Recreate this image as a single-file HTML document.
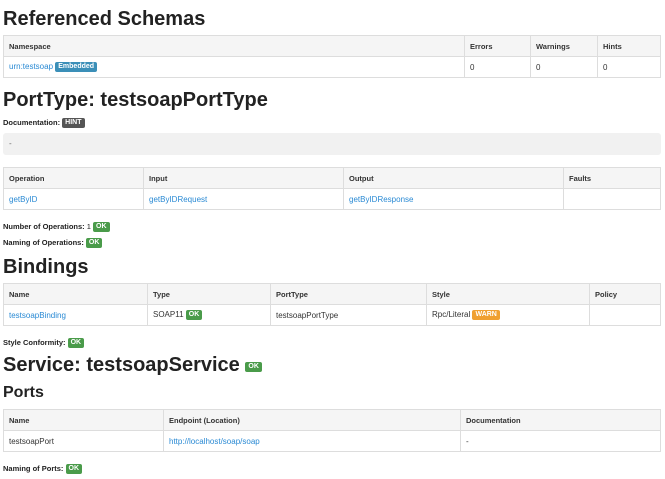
<!DOCTYPE html>
<html><head><style>
body{margin:0;width:665px;height:479px;background:#fff;font-family:"Liberation Sans",Arial,sans-serif;color:#333;position:relative;overflow:hidden}
.a{position:absolute}
h1{position:absolute;margin:0;font-size:20px;font-weight:bold;left:3px;line-height:22px;color:#222}
h2{position:absolute;margin:0;font-size:16px;font-weight:bold;left:3px;line-height:18px;color:#222}
table{position:absolute;left:3px;width:658px;border-collapse:collapse;font-size:8px;table-layout:fixed}
td,th{border:1px solid #ddd;padding:0 5px;text-align:left;height:20px;white-space:nowrap}
th{background:#f5f5f5;font-weight:bold;font-size:7.5px}
a{color:#2a8ad4;text-decoration:none}
.b{display:inline-block;color:#fff;font-size:7px;font-weight:bold;padding:1px 3px;border-radius:2px;line-height:8px;vertical-align:1px}
.ok{background:#4a9b4a}.info{background:#3b8fb8}.hint{background:#555}.warn{background:#f0a030}
.l{position:absolute;left:3px;font-size:7.5px;font-weight:bold;color:#222}
</style></head><body>
<h1 style="top:8px">Referenced Schemas</h1>
<table style="top:35px"><tr><th style="width:450px">Namespace</th><th style="width:55px">Errors</th><th style="width:56px">Warnings</th><th>Hints</th></tr>
<tr><td><a>urn:testsoap</a> <span class="b info">Embedded</span></td><td>0</td><td>0</td><td>0</td></tr></table>
<h1 style="top:89px">PortType: testsoapPortType</h1>
<div class="l" style="top:118px">Documentation: <span class="b hint">HINT</span></div>
<div class="a" style="left:3px;top:133px;width:658px;height:22px;background:#f1f1f1;border-radius:3px;font-size:8px;line-height:22px;text-indent:6px;color:#666">-</div>
<table style="top:167px"><tr><th style="width:129px">Operation</th><th style="width:189px">Input</th><th style="width:209px">Output</th><th>Faults</th></tr>
<tr><td><a>getByID</a></td><td><a>getByIDRequest</a></td><td><a>getByIDResponse</a></td><td></td></tr></table>
<div class="l" style="top:222px">Number of Operations: <span style="font-weight:normal">1</span> <span class="b ok">OK</span></div>
<div class="l" style="top:238px">Naming of Operations: <span class="b ok">OK</span></div>
<h1 style="top:256px">Bindings</h1>
<table style="top:283px"><tr><th style="width:133px">Name</th><th style="width:112px">Type</th><th style="width:145px">PortType</th><th style="width:152px">Style</th><th>Policy</th></tr>
<tr><td><a>testsoapBinding</a></td><td>SOAP11 <span class="b ok">OK</span></td><td>testsoapPortType</td><td>Rpc/Literal <span class="b warn">WARN</span></td><td></td></tr></table>
<div class="l" style="top:338px">Style Conformity: <span class="b ok">OK</span></div>
<h1 style="top:354px">Service: testsoapService <span class="b ok" style="vertical-align:3px">OK</span></h1>
<h2 style="top:384px">Ports</h2>
<table style="top:409px"><tr><th style="width:149px">Name</th><th style="width:286px">Endpoint (Location)</th><th>Documentation</th></tr>
<tr><td>testsoapPort</td><td><a>http://localhost/soap/soap</a></td><td>-</td></tr></table>
<div class="l" style="top:464px">Naming of Ports: <span class="b ok">OK</span></div>
</body></html>
